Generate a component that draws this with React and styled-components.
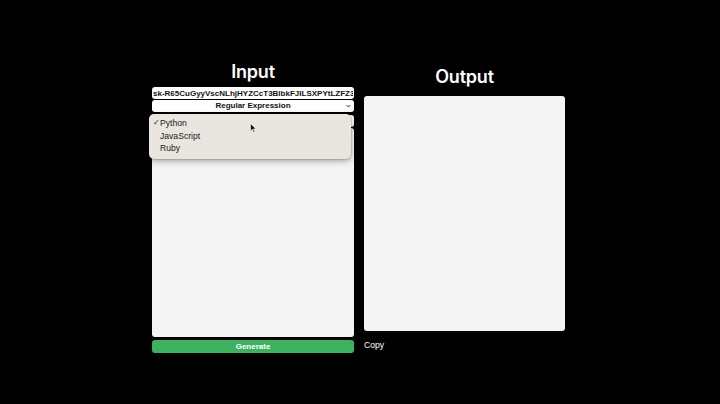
import React, { useState } from 'react';
import styled, { createGlobalStyle } from 'styled-components';

const GlobalStyle = createGlobalStyle`
  html, body {
    margin: 0;
    padding: 0;
    background: #000;
  }
  body {
    font-family: "Liberation Sans", Arial, sans-serif;
  }
`;

const Page = styled.div`
  width: 720px;
  height: 404px;
  display: flex;
  align-items: flex-start;
  justify-content: center;
  gap: 10px;
  padding: 61px 3px 0 0;
  box-sizing: border-box;
`;

const Column = styled.div`
  width: ${props => props.width}px;
  margin-top: ${props => props.top || 0}px;
  display: flex;
  flex-direction: column;
`;

const Title = styled.h2`
  margin: 0 0 ${props => props.gap}px;
  font-family: Inter, "Noto Sans", sans-serif;
  font-weight: 600;
  font-size: 18px;
  line-height: 22px;
  color: #fff;
  text-align: center;
  letter-spacing: -0.2px;
`;

const KeyInput = styled.input`
  display: block;
  box-sizing: border-box;
  height: 12px;
  width: 100%;
  border: none;
  border-radius: 3px;
  padding: 0 1px;
  margin: 0;
  background: #fff;
  font-family: "Liberation Sans", Arial, sans-serif;
  font-weight: 700;
  font-size: 8px;
  color: #111;
  outline: none;
`;

const SelectWrap = styled.div`
  position: relative;
  height: 12px;
  margin-top: ${props => props.top}px;
`;

const SelectButton = styled.button`
  display: flex;
  align-items: center;
  justify-content: center;
  position: relative;
  box-sizing: border-box;
  width: 100%;
  height: 12px;
  margin: 0;
  border: none;
  border-radius: 3px;
  background: #fff;
  padding: 0;
  font-family: "Liberation Sans", Arial, sans-serif;
  font-weight: 700;
  font-size: 8px;
  line-height: 12px;
  color: #111;
`;

const Chevron = styled.svg`
  position: absolute;
  right: 3px;
  top: 4px;
  width: 5px;
  height: 4px;
`;

const Menu = styled.div`
  position: absolute;
  left: -3px;
  top: -1px;
  width: 202px;
  box-sizing: border-box;
  padding: 3px 0 4px;
  background: #e9e5df;
  border-radius: 5px;
  box-shadow: 0 2px 6px rgba(0, 0, 0, 0.35), 0 0 0 0.5px rgba(0, 0, 0, 0.2);
  z-index: 5;
`;

const MenuItem = styled.div`
  position: relative;
  height: 12.5px;
  line-height: 12.5px;
  padding-left: 11px;
  font-family: "Liberation Sans", Arial, sans-serif;
  font-size: 8.6px;
  color: #1a1a1a;
`;

const Check = styled.span`
  position: absolute;
  left: 4px;
  top: 0;
  font-size: 7.5px;
`;

const Cursor = styled.svg`
  position: absolute;
  left: 101px;
  top: 9px;
  width: 7px;
  height: 10px;
`;

const Area = styled.textarea`
  display: block;
  box-sizing: border-box;
  width: 100%;
  height: ${props => props.h}px;
  margin: ${props => props.top}px 0 0;
  border: none;
  border-radius: 3px;
  background: #f4f4f4;
  resize: none;
  outline: none;
  padding: 4px;
  font-family: "Liberation Sans", Arial, sans-serif;
  font-size: 9px;
`;

const Generate = styled.button`
  margin-top: 3px;
  height: 13px;
  width: 100%;
  border: none;
  border-radius: 3px;
  background: #3db160;
  color: #fff;
  font-family: "Liberation Sans", Arial, sans-serif;
  font-weight: 700;
  font-size: 8px;
  padding: 0;
  cursor: pointer;
`;

const CopyText = styled.div`
  margin-top: 9px;
  font-family: "Liberation Sans", Arial, sans-serif;
  font-size: 8.6px;
  color: #fff;
  height: 12px;
`;

const languages = ['Python', 'JavaScript', 'Ruby'];

function ChevronIcon() {
  return (
    <Chevron viewBox="0 0 5 4">
      <path d="M0.6 1 L2.5 3 L4.4 1" fill="none" stroke="#222" strokeWidth="0.9" />
    </Chevron>
  );
}

function App() {
  const [apiKey, setApiKey] = useState('sk-R65CuGyyVscNLhjHYZCcT3BlbkFJILSXPYtLZFZ3');
  const [lang] = useState('Python');

  return (
    <>
      <GlobalStyle />
      <Page>
        <Column width={202}>
          <Title gap={4}>Input</Title>
          <KeyInput value={apiKey} onChange={e => setApiKey(e.target.value)} />
          <SelectWrap top={1}>
            <SelectButton>
              Regular Expression
              <ChevronIcon />
            </SelectButton>
          </SelectWrap>
          <SelectWrap top={3}>
            <SelectButton>
              {lang}
              <ChevronIcon />
            </SelectButton>
            <Menu>
              {languages.map(l => (
                <MenuItem key={l}>
                  {l === lang && <Check>✓</Check>}
                  {l}
                </MenuItem>
              ))}
              <Cursor viewBox="0 0 7 10">
                <path d="M0.5 0.5 L0.5 8 L2.3 6.3 L3.6 9.3 L4.8 8.8 L3.5 5.9 L6 5.9 Z" fill="#111" stroke="#fff" strokeWidth="0.6" />
              </Cursor>
            </Menu>
          </SelectWrap>
          <Area h={209} top={1} />
          <Generate>Generate</Generate>
        </Column>
        <Column width={201} top={5}>
          <Title gap={8}>Output</Title>
          <Area h={235} top={0} readOnly />
          <CopyText>Copy</CopyText>
        </Column>
      </Page>
    </>
  );
}

export default App;
